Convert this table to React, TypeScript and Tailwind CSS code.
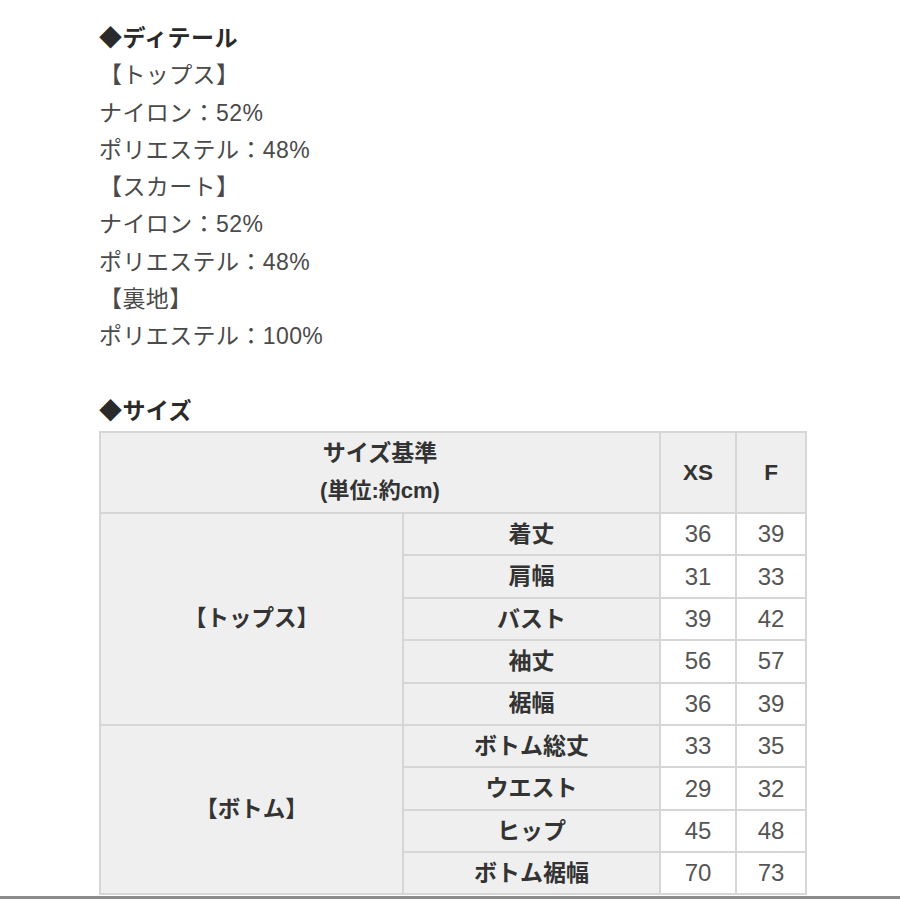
import React from 'react';

const font = { fontFamily: '"Liberation Sans", "Noto Sans CJK JP", "Noto Sans", sans-serif' };

const tops = [
  ['着丈', '36', '39'],
  ['肩幅', '31', '33'],
  ['バスト', '39', '42'],
  ['袖丈', '56', '57'],
  ['裾幅', '36', '39'],
];

const bottoms = [
  ['ボトム総丈', '33', '35'],
  ['ウエスト', '29', '32'],
  ['ヒップ', '45', '48'],
  ['ボトム裾幅', '70', '73'],
];

const details = [
  { text: '◆ディテール', bold: true },
  { text: '【トップス】' },
  { text: 'ナイロン：52%' },
  { text: 'ポリエステル：48%' },
  { text: '【スカート】' },
  { text: 'ナイロン：52%' },
  { text: 'ポリエステル：48%' },
  { text: '【裏地】' },
  { text: 'ポリエステル：100%' },
];

const cell = 'border-2 border-[#d6d6d6] text-center';

function Rows({ label, rows }: { label: string; rows: string[][] }) {
  return (
    <>
      {rows.map((r, i) => (
        <tr key={r[0]} className="h-[42.4px]">
          {i === 0 && (
            <td rowSpan={rows.length} className={`${cell} bg-[#efefef] font-bold text-[#333] text-[22.5px]`}>
              {label}
            </td>
          )}
          <td className={`${cell} bg-[#efefef] font-bold text-[#333] text-[23px]`}>{r[0]}</td>
          <td className={`${cell} bg-white text-[#555] text-[24px]`}>{r[1]}</td>
          <td className={`${cell} bg-white text-[#555] text-[24px]`}>{r[2]}</td>
        </tr>
      ))}
    </>
  );
}

export default function App() {
  return (
    <div className="w-[900px] h-[900px] bg-white overflow-hidden flex flex-col" style={font}>
      <div className="pl-[99px] pt-[20px] text-[23px] tracking-[0.4px] leading-[37.3px] text-[#4a4a4a]">
        {details.map((d, i) => (
          <div key={i} className={d.bold ? 'font-bold text-[#2a2a2a]' : ''}>
            {d.text}
          </div>
        ))}
        <div className="h-[37px]" />
        <div className="font-bold text-[#2a2a2a]">◆サイズ</div>
      </div>

      <div className="pl-[99px] mt-[1px]">
        <table className="border-collapse w-[706px] table-fixed">
          <colgroup>
            <col className="w-[303px]" />
            <col className="w-[257px]" />
            <col className="w-[76px]" />
            <col className="w-[70px]" />
          </colgroup>
          <tbody>
            <tr className="h-[81px]">
              <td colSpan={2} className={`${cell} bg-[#efefef] font-bold text-[#333] text-[23px] leading-[37px]`}>
                <div>サイズ基準</div>
                <div className="text-[22px]">(単位:約cm)</div>
              </td>
              <td className={`${cell} bg-[#efefef] font-bold text-[#333] text-[22.5px]`}>XS</td>
              <td className={`${cell} bg-[#efefef] font-bold text-[#333] text-[22.5px]`}>F</td>
            </tr>
            <Rows label="【トップス】" rows={tops} />
            <Rows label="【ボトム】" rows={bottoms} />
          </tbody>
        </table>
      </div>
      <div className="mt-[1px] h-[3px] bg-[#8a8a8a]" />
    </div>
  );
}
